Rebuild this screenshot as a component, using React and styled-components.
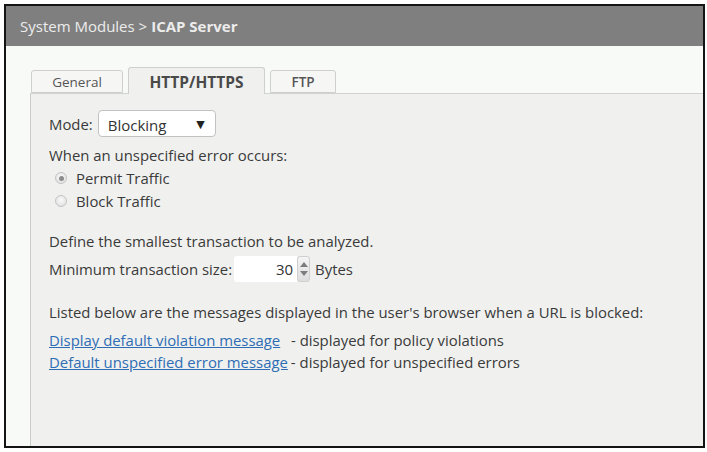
import React, { useState } from 'react'
import styled, { createGlobalStyle } from 'styled-components'

const GlobalStyle = createGlobalStyle`
  html, body {
    margin: 0;
    background: #ffffff;
  }
  body {
    font-family: "Open Sans", "DejaVu Sans", sans-serif;
    color: #3a3a3a;
  }
`

const Frame = styled.div`
  box-sizing: border-box;
  width: 701px;
  height: 444px;
  margin: 4px 0 0 4px;
  border: 2px solid #141414;
  display: flex;
  flex-direction: column;
  overflow: hidden;
`

const Header = styled.div`
  height: 40px;
  flex: none;
  background: #7f7f7f;
  color: #ececec;
  font-size: 15px;
  display: flex;
  align-items: center;
  padding-left: 14px;
  gap: 4px;

  b {
    font-weight: 700;
  }
`

const Body = styled.div`
  flex: 1;
  display: flex;
  background: #f8faf7;
`

const Gutter = styled.div`
  width: 24px;
  flex: none;
`

const Main = styled.div`
  flex: 1;
  display: flex;
  flex-direction: column;
`

const TabStrip = styled.div`
  height: 47px;
  flex: none;
  display: flex;
  align-items: flex-end;
  gap: 5px;
  padding-left: 1px;
  border-bottom: 1px solid #d2d2d2;
`

const Tab = styled.div`
  box-sizing: border-box;
  width: ${({ w }) => w}px;
  height: ${({ active }) => (active ? 27 : 23)}px;
  margin-bottom: ${({ active }) => (active ? -1 : 0)}px;
  background: ${({ active }) => (active ? '#f0f1ef' : '#f6f7f5')};
  border: 1px solid #cfcfcf;
  border-bottom: ${({ active }) => (active ? 'none' : '1px solid #cfcfcf')};
  border-radius: 3px 3px 0 0;
  display: flex;
  align-items: center;
  justify-content: center;
  font-size: ${({ active }) => (active ? 15.5 : 13.5)}px;
  font-weight: ${({ active, weight }) => (active ? 700 : weight || 400)};
  color: ${({ active }) => (active ? '#4a4a4a' : '#555')};
  padding-top: ${({ active }) => (active ? 2 : 0)}px;
`

const Panel = styled.div`
  flex: 1;
  background: #f0f1ef;
  border-left: 1px solid #cbcbcb;
  padding: 16px 18px 0 18px;
  font-size: 14.9px;
`

const Row = styled.div`
  display: flex;
  align-items: center;
  gap: ${({ gap }) => gap || 0}px;
  margin-top: ${({ mt }) => mt || 0}px;
  height: ${({ h }) => h || 20}px;
  white-space: nowrap;
`

const Select = styled.div`
  box-sizing: border-box;
  width: 118px;
  height: 27px;
  background: #fff;
  border: 1px solid #c2c2c2;
  border-radius: 4px;
  display: flex;
  align-items: center;
  justify-content: space-between;
  padding: 3px 10px 0 9px;
  font-size: 15px;
  color: #333;

  span.arrow {
    font-size: 11px;
    margin-top: -4px;
    color: #222;
  }
`

const Radio = styled.span`
  box-sizing: border-box;
  width: 12px;
  height: 12px;
  border-radius: 50%;
  margin-left: 6px;
  border: 1px solid #c4c4c4;
  background: radial-gradient(circle at 50% 40%, #fafafa, #dcdcdc);
  display: inline-flex;
  align-items: center;
  justify-content: center;

  &::after {
    content: '';
    width: 5px;
    height: 5px;
    border-radius: 50%;
    background: ${({ checked }) => (checked ? '#8c8c8c' : 'transparent')};
  }
`

const NumberBox = styled.div`
  display: flex;
  align-items: center;
  height: 26px;
  margin-left: 2px;
`

const NumberField = styled.div`
  box-sizing: border-box;
  width: 63px;
  height: 26px;
  background: #fff;
  border-radius: 3px 0 0 3px;
  display: flex;
  align-items: center;
  justify-content: flex-end;
  padding-right: 4px;
  font-size: 15px;
  color: #333;
`

const Spinner = styled.div`
  box-sizing: border-box;
  width: 13px;
  height: 26px;
  background: linear-gradient(#f4f4f4, #dedede);
  border: 1px solid #cfcfcf;
  border-radius: 3px;
  display: flex;
  flex-direction: column;
  align-items: center;
  justify-content: space-around;
  padding: 3px 0;
`

const Tri = styled.span`
  width: 0;
  height: 0;
  border-left: 4px solid transparent;
  border-right: 4px solid transparent;
  border-${({ down }) => (down ? 'top' : 'bottom')}: 5px solid #7d7d7d;
`

const Link = styled.a`
  color: #2e6db4;
  text-decoration: underline;
  margin-right: 3px;
  cursor: pointer;
`

const App = () => {
  const [tab] = useState('HTTP/HTTPS')
  const tabs = [
    { name: 'General', w: 92 },
    { name: 'HTTP/HTTPS', w: 137 },
    { name: 'FTP', w: 66, weight: 600 },
  ]

  return (
    <>
      <GlobalStyle />
      <Frame>
        <Header>
          System Modules &gt; <b>ICAP Server</b>
        </Header>
        <Body>
          <Gutter />
          <Main>
            <TabStrip>
              {tabs.map((t) => (
                <Tab key={t.name} w={t.w} weight={t.weight} active={tab === t.name}>
                  {t.name}
                </Tab>
              ))}
            </TabStrip>
            <Panel>
              <Row h={27} gap={5}>
                Mode:
                <Select>
                  <span>Blocking</span>
                  <span className="arrow">▼</span>
                </Select>
              </Row>
              <Row mt={8}>When an unspecified error occurs:</Row>
              <Row mt={3} gap={9}>
                <Radio checked />
                Permit Traffic
              </Row>
              <Row mt={3} gap={9}>
                <Radio />
                Block Traffic
              </Row>
              <Row mt={20}>Define the smallest transaction to be analyzed.</Row>
              <Row mt={5} h={26}>
                <span>Minimum transaction size:</span>
                <NumberBox>
                  <NumberField>30</NumberField>
                  <Spinner>
                    <Tri />
                    <Tri down />
                  </Spinner>
                </NumberBox>
                <span style={{ marginLeft: 5 }}>Bytes</span>
              </Row>
              <Row mt={20}>
                Listed below are the messages displayed in the user's browser when a URL is blocked:
              </Row>
              <Row mt={8}>
                <Link>Display default violation message</Link>&nbsp; - displayed for policy violations
              </Row>
              <Row mt={2}>
                <Link>Default unspecified error message</Link>- displayed for unspecified errors
              </Row>
            </Panel>
          </Main>
        </Body>
      </Frame>
    </>
  )
}

export default App
